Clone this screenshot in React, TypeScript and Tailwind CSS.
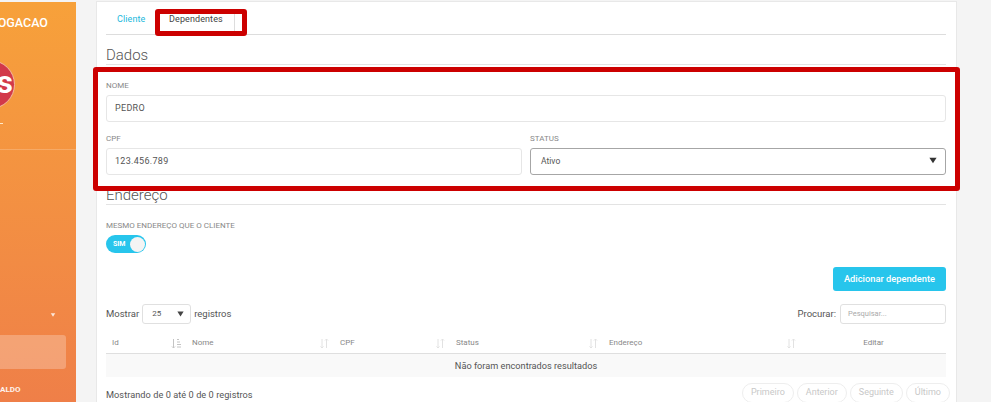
const Caret = ({ className }: { className: string }) => (
  <svg viewBox="0 0 10 8" className={className}>
    <path d="M0.5 0.5h9L5 7.5z" fill="currentColor" />
  </svg>
)

const SortIcon = ({ active }: { active?: boolean }) => (
  <svg viewBox="0 0 11 11" fill="none" strokeWidth={1} className={`w-[11px] h-[11px] ${active ? "text-[#c4c4c4]" : "text-[#e2e2e2]"}`} stroke="currentColor">
    {active ? (
      <>
        <path d="M2.5 1v9M1 8.5l1.5 1.5L4 8.5" />
        <path d="M6 1.5h2M6 4h3M6 6.5h4M6 9h4" />
      </>
    ) : (
      <>
        <path d="M3 1v9M1.5 8.5L3 10l1.5-1.5" />
        <path d="M7.5 10V1M6 2.5L7.5 1 9 2.5" />
      </>
    )}
  </svg>
)

const columns = [
  { label: "Id", width: "w-[80px]", active: true },
  { label: "Nome", width: "w-[148px]" },
  { label: "CPF", width: "w-[116px]" },
  { label: "Status", width: "w-[153px]" },
  { label: "Endereço", width: "w-[198px]" },
]

const pages = ["Primeiro", "Anterior", "Seguinte", "Último"]

function Sidebar() {
  return (
    <aside className="relative w-[76px] h-[400px] mt-[2px] shrink-0 overflow-hidden bg-gradient-to-b from-[#f7a13a] to-[#ef7f48] text-white">
      <div className="absolute right-[28px] top-[12px] text-[12.5px] font-medium whitespace-nowrap">OGACAO</div>
      <div className="absolute left-[-34px] top-[58px] w-[49px] h-[49px] rounded-full bg-[#d2394a] border border-[#f3b9a0] flex items-center justify-end pr-[1px] text-[32px] font-bold leading-none pb-[6px]">
        s
      </div>
      <div className="absolute left-0 top-[121px] w-[3px] h-[1px] bg-[#ffe9c9]" />
      <div className="absolute left-0 right-0 top-[147px] h-[1px] bg-white/20" />
      <Caret className="absolute left-[50px] top-[311px] w-[6px] h-[4px] text-white/80" />
      <div className="absolute left-[-6px] top-[333px] w-[72px] h-[34px] rounded-[3px] bg-white/25" />
      <div className="absolute left-0 top-[382px] text-[8px] font-bold text-white/90">ALDO</div>
    </aside>
  )
}

function Field({ label, value }: { label: string; value: string }) {
  return (
    <div className="flex-1">
      <div className="text-[8px] leading-[10px] text-[#888888] mb-[4px]">{label}</div>
      <div className="h-[27px] rounded-[3px] border border-[#e6e6e6] px-[8px] flex items-center text-[9px] tracking-[0.3px] text-[#555555]">{value}</div>
    </div>
  )
}

export default function App() {
  return (
    <div className="relative w-[991px] h-[402px] overflow-hidden bg-[#f4f4f4] flex font-['Roboto',sans-serif]">
      <Sidebar />

      <main className="ml-[20px] mt-[1px] w-[861px] h-[401px] overflow-hidden bg-white border-x border-t border-[#e8e8e8] pl-[9px] pr-[10px]">
        {/* Tabs */}
        <div className="h-[33px] border-b border-[#dddddd] flex items-center pl-[11px] pt-[3px] text-[9px] tracking-[0.1px]">
          <span className="text-[#22b8dc] w-[52px]">Cliente</span>
          <span className="text-[#444444]">Dependentes</span>
        </div>

        {/* Dados */}
        <h2 className="mt-[11px] h-[19px] border-b border-[#e3e3e3] text-[15px] leading-[18px] font-light text-[#555555]">Dados</h2>
        <div className="mt-[16px]">
          <Field label="NOME" value="PEDRO" />
        </div>
        <div className="mt-[12px] flex gap-[8px]">
          <Field label="CPF" value="123.456.789" />
          <div className="flex-1">
            <div className="text-[8px] leading-[10px] text-[#888888] mb-[4px]">STATUS</div>
            <div className="h-[27px] rounded-[3px] border border-[#a6a6a6] px-[10px] flex items-center justify-between text-[8.5px] text-[#555555]">
              Ativo
              <Caret className="w-[8px] h-[7px] text-[#333333] mr-[-2px] mb-[2px]" />
            </div>
          </div>
        </div>

        {/* Endereço */}
        <h2 className="mt-[11px] h-[19px] border-b border-[#e3e3e3] text-[15px] leading-[18px] font-light text-[#555555]">Endereço</h2>
        <div className="mt-[16px] text-[8px] leading-[10px] text-[#888888]">MESMO ENDEREÇO QUE O CLIENTE</div>
        <div className="mt-[4px] w-[40px] h-[18px] rounded-full bg-[#27c5ec] flex items-center justify-between pl-[7px] pr-[1.5px]">
          <span className="text-[7px] font-bold text-white">SIM</span>
          <span className="w-[15px] h-[15px] rounded-full bg-[#f4f4f4]" />
        </div>

        <div className="mt-[14px] flex justify-end">
          <button className="w-[113px] h-[24px] rounded-[3px] bg-[#27c5ec] text-[9.3px] font-medium text-white">Adicionar dependente</button>
        </div>

        {/* Controles da tabela */}
        <div className="mt-[13px] h-[20px] flex items-center justify-between text-[9.5px] text-[#555555]">
          <div className="flex items-center gap-[3px]">
            Mostrar
            <div className="w-[49px] h-[20px] rounded-[3px] border border-[#e0e0e0] flex items-center justify-between pl-[9px] pr-[6px] text-[8px]">
              25
              <Caret className="w-[7px] h-[6px] text-[#444444]" />
            </div>
            registros
          </div>
          <div className="flex items-center gap-[4px]">
            Procurar:
            <div className="w-[106px] h-[20px] rounded-[3px] border border-[#e0e0e0] flex items-center pl-[7px] text-[7.5px] text-[#aaaaaa]">Pesquisar...</div>
          </div>
        </div>

        {/* Tabela */}
        <div className="mt-[9px] h-[21px] border-b border-[#dfdfdf] flex items-center text-[8px] text-[#888888]">
          {columns.map((col) => (
            <div key={col.label} className={`${col.width} pl-[6px] pr-[4px] flex items-center justify-between`}>
              {col.label}
              <SortIcon active={col.active} />
            </div>
          ))}
          <div className="flex-1 text-center">Editar</div>
        </div>
        <div className="h-[23px] bg-[#f9f9f9] flex items-center justify-center text-[9.2px] text-[#555555]">Não foram encontrados resultados</div>

        <div className="mt-[6px] flex items-start justify-between">
          <div className="mt-[5px] text-[9.2px] tracking-[0.05px] text-[#555555]">Mostrando de 0 até 0 de 0 registros</div>
          <div className="flex gap-[3px] mr-[-4px]">
            {pages.map((page) => (
              <span key={page} className="h-[20px] px-[8px] rounded-full border border-[#eeeeee] flex items-center text-[9px] text-[#c8c8c8]">{page}</span>
            ))}
          </div>
        </div>
      </main>

      {/* Marcações vermelhas */}
      <div className="absolute left-[155px] top-[9px] w-[92px] h-[27px] rounded-[3px] border-[5px] border-[#cc0000] pointer-events-none">
        <div className="absolute right-[7px] top-0 bottom-0 w-[1px] bg-[#dddddd]" />
      </div>
      <div className="absolute left-[93px] top-[67px] w-[867px] h-[124px] rounded-[3px] border-[5px] border-[#cc0000] pointer-events-none" />
    </div>
  )
}
